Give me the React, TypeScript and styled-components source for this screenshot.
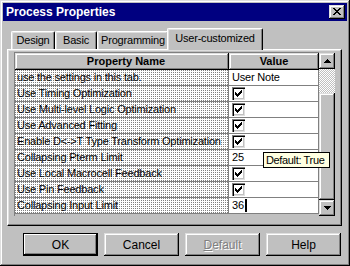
import React from "react";
import styled, { createGlobalStyle } from "styled-components";

const GlobalStyle = createGlobalStyle`
  body {
    margin: 0;
    background: #c0c0c0;
  }
  * {
    box-sizing: border-box;
  }
`;

const raised = `
  background: #c0c0c0;
  box-shadow: inset -1px -1px #000, inset 1px 1px #dfdfdf,
    inset -2px -2px #808080, inset 2px 2px #fff;
`;

const Window = styled.div`
  position: relative;
  width: 350px;
  height: 266px;
  padding: 3px;
  background: #c0c0c0;
  box-shadow: inset -1px -1px #000, inset 1px 1px #dfdfdf,
    inset -2px -2px #808080, inset 2px 2px #fff;
  font-family: "Liberation Sans", Arial, sans-serif;
  font-size: 11px;
  letter-spacing: -0.2px;
  color: #000;
  display: flex;
  flex-direction: column;
`;

const TitleBar = styled.div`
  height: 18px;
  background: #000080;
  color: #fff;
  display: flex;
  align-items: center;
  justify-content: space-between;
  padding: 0 2px 0 3px;
`;

const Title = styled.span`
  font-weight: bold;
  font-size: 12px;
  letter-spacing: 0;
`;

const CloseButton = styled.div`
  ${raised}
  width: 16px;
  height: 14px;
  display: flex;
  align-items: center;
  justify-content: center;
  padding-bottom: 1px;
`;

const Body = styled.div`
  padding: 0 5px 0 4px;
`;

const TabStrip = styled.div`
  position: relative;
  z-index: 1;
  height: 23px;
  margin-top: 6px;
  margin-bottom: -1px;
  padding-left: 4px;
  display: flex;
  align-items: flex-end;
`;

const Tab = styled.div<{ $w: number; $active?: boolean }>`
  width: ${(p) => p.$w}px;
  height: ${(p) => (p.$active ? 22 : 18)}px;
  margin: ${(p) => (p.$active ? "0 -2px 0 -2px" : "0 0 1px 0")};
  padding-top: ${(p) => (p.$active ? 3 : 2)}px;
  text-align: center;
  background: #c0c0c0;
  border-top: 1px solid #fff;
  border-left: 1px solid #fff;
  border-right: 1px solid #000;
  border-radius: 2px 2px 0 0;
  box-shadow: inset -1px 0 #808080, inset 1px 1px #dfdfdf;
  z-index: ${(p) => (p.$active ? 2 : 1)};
  white-space: nowrap;
`;

const Panel = styled.div`
  height: 177px;
  padding: 2px 6px 0 6px;
  border-top: 1px solid #fff;
  border-left: 1px solid #fff;
  border-right: 1px solid #000;
  border-bottom: 1px solid #000;
  box-shadow: inset -1px -1px #808080, inset 1px 1px #dfdfdf;
`;

const Grid = styled.div`
  display: flex;
  width: 321px;
`;

const Table = styled.div`
  width: 305px;
  border-left: 1px solid #808080;
  border-top: 1px solid #808080;
`;

const HeaderRow = styled.div`
  display: flex;
  height: 17px;
`;

const HeaderCell = styled.div<{ $w: number }>`
  ${raised}
  width: ${(p) => p.$w}px;
  font-weight: bold;
  text-align: center;
  line-height: 16px;
  letter-spacing: 0;
  padding-left: ${(p) => (p.$w > 100 ? 8 : 0)}px;
`;

const Row = styled.div`
  display: flex;
  height: 16px;
  border-bottom: 1px solid #808080;
`;

const NameCell = styled.div`
  width: 214px;
  padding-left: 2px;
  line-height: 15px;
  white-space: nowrap;
  overflow: hidden;
  border-right: 1px solid #808080;
  background-color: #808080;
  background-image: linear-gradient(to bottom, transparent 1px, #fff 1px),
    linear-gradient(to right, transparent 1px, #fff 1px);
  background-size: 2px 2px;
`;

const ValueCell = styled.div`
  flex: 1;
  background: #fff;
  padding-left: 3px;
  line-height: 15px;
  display: flex;
  align-items: center;
  border-right: 1px solid #808080;
`;

const CheckBox = styled.div`
  width: 13px;
  height: 13px;
  background: #fff;
  box-shadow: inset 1px 1px #808080, inset 2px 2px #000,
    inset -1px -1px #dfdfdf, inset -2px -2px #c0c0c0;
  padding: 3px 0 0 3px;
  display: flex;
`;

const Caret = styled.span`
  display: inline-block;
  width: 2px;
  height: 13px;
  background: #000;
  margin-left: 1px;
`;

const ScrollBar = styled.div`
  width: 16px;
  height: 163px;
  margin-top: 1px;
  display: flex;
  flex-direction: column;
`;

const ScrollButton = styled.div`
  ${raised}
  height: 16px;
  display: flex;
  align-items: center;
  justify-content: center;
`;

const Track = styled.div<{ $h: number }>`
  height: ${(p) => p.$h}px;
  background: repeating-conic-gradient(#c0c0c0 0 25%, #fff 0 50%) 0 0 / 2px
    2px;
`;

const Thumb = styled.div`
  ${raised}
  flex: 1;
`;

const ButtonRow = styled.div`
  display: flex;
  gap: 6px;
  padding-left: 20px;
  margin-top: 7px;
`;

const Button = styled.div<{ $default?: boolean; $disabled?: boolean }>`
  ${raised}
  width: 75px;
  height: 23px;
  display: flex;
  align-items: center;
  justify-content: center;
  font-size: 12px;
  letter-spacing: 0;
  ${(p) =>
    p.$default &&
    `box-shadow: inset 1px 1px #000, inset -1px -1px #000, inset -2px -2px #000,
      inset 2px 2px #fff, inset -3px -3px #808080;`}
  ${(p) =>
    p.$disabled && `color: #808080; text-shadow: 1px 1px #fff;`}
`;

const Tooltip = styled.div`
  position: absolute;
  left: 263px;
  top: 152px;
  width: 67px;
  height: 16px;
  background: #ffffe1;
  border: 1px solid #000;
  padding-left: 2px;
  line-height: 14px;
  letter-spacing: -0.35px;
  white-space: nowrap;
`;

const Pix = ({ d, w, h }: { d: string; w: number; h: number }) => (
  <svg width={w} height={h} viewBox={`0 0 ${w} ${h}`} shapeRendering="crispEdges">
    <path d={d} fill="#000" />
  </svg>
);

const CHECK =
  "M6 0h1v1h-1z M5 1h2v1h-2z M0 2h1v1h-1z M4 2h3v1h-3z M0 3h2v1h-2z M3 3h3v1h-3z M0 4h5v1h-5z M1 5h3v1h-3z M2 6h1v1h-1z";
const UP = "M3 0h1v1h1v1h1v1h1v1h-7v-1h1v-1h1v-1h1z";
const DOWN = "M0 0h7v1h-1v1h-1v1h-1v1h-1v-1h-1v-1h-1v-1h-1z";
const CLOSE =
  "M0 0h2v1h-2z M6 0h2v1h-2z M1 1h2v1h-2z M5 1h2v1h-2z M2 2h4v1h-4z M3 3h2v1h-2z M2 4h4v1h-4z M1 5h2v1h-2z M5 5h2v1h-2z M0 6h2v1h-2z M6 6h2v1h-2z";

type Value = { kind: "text"; text: string; caret?: boolean } | { kind: "check" };

const rows: { name: string; value: Value }[] = [
  { name: "use the settings in this tab.", value: { kind: "text", text: "User Note" } },
  { name: "Use Timing Optimization", value: { kind: "check" } },
  { name: "Use Multi-level Logic Optimization", value: { kind: "check" } },
  { name: "Use Advanced Fitting", value: { kind: "check" } },
  { name: "Enable D<->T Type Transform Optimization", value: { kind: "check" } },
  { name: "Collapsing Pterm Limit", value: { kind: "text", text: "25" } },
  { name: "Use Local Macrocell Feedback", value: { kind: "check" } },
  { name: "Use Pin Feedback", value: { kind: "check" } },
  { name: "Collapsing Input Limit", value: { kind: "text", text: "36", caret: true } },
];

function App() {
  return (
    <>
      <GlobalStyle />
      <Window>
        <TitleBar>
          <Title>Process Properties</Title>
          <CloseButton>
            <Pix d={CLOSE} w={8} h={7} />
          </CloseButton>
        </TitleBar>

        <Body>
          <TabStrip>
            <Tab $w={44}>Design</Tab>
            <Tab $w={42}>Basic</Tab>
            <Tab $w={72}>Programming</Tab>
            <Tab $w={96} $active>
              User-customized
            </Tab>
          </TabStrip>

          <Panel>
            <Grid>
              <Table>
                <HeaderRow>
                  <HeaderCell $w={214}>Property Name</HeaderCell>
                  <HeaderCell $w={90}>Value</HeaderCell>
                </HeaderRow>
                {rows.map((r) => (
                  <Row key={r.name}>
                    <NameCell>{r.name}</NameCell>
                    <ValueCell>
                      {r.value.kind === "check" ? (
                        <CheckBox>
                          <Pix d={CHECK} w={7} h={7} />
                        </CheckBox>
                      ) : (
                        <>
                          {r.value.text}
                          {r.value.caret && <Caret />}
                        </>
                      )}
                    </ValueCell>
                  </Row>
                ))}
              </Table>
              <ScrollBar>
                <ScrollButton>
                  <Pix d={UP} w={7} h={4} />
                </ScrollButton>
                <Track $h={24} />
                <Thumb />
                <ScrollButton>
                  <Pix d={DOWN} w={7} h={4} />
                </ScrollButton>
              </ScrollBar>
            </Grid>
          </Panel>
        </Body>

        <ButtonRow>
          <Button $default>OK</Button>
          <Button>Cancel</Button>
          <Button $disabled>
            <span>
              <u>D</u>efault
            </span>
          </Button>
          <Button>Help</Button>
        </ButtonRow>

        <Tooltip>Default: True</Tooltip>
      </Window>
    </>
  );
}

export default App;
